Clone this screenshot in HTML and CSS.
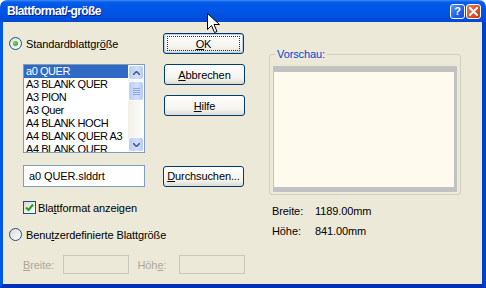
FILE: index.html
```html
<!DOCTYPE html>
<html lang="de">
<head>
  <meta charset="UTF-8" />
  <title>Blattformat/-größe</title>
  <link rel="stylesheet" href="styles.css">
</head>
<body>
  <div class="window">
    <div class="titlebar">
      <span class="title">Blattformat/-größe</span>
      <span class="cbtn help">?</span>
      <span class="cbtn close">
        <svg width="9" height="9" viewBox="0 0 9 9"><path d="M1 1L8 8M8 1L1 8" stroke="#fff" stroke-width="2" stroke-linecap="square"/></svg>
      </span>
      <svg class="cursor" width="13" height="21" viewBox="0 0 13 21">
        <path d="M0.5 0.5V16.5L4.5 12.5L7.5 19.5L10 18.5L7 11.5H12.5Z" fill="#fff" stroke="#000" stroke-width="1"/>
      </svg>
    </div>

    <div class="frame">
      <div class="left">
        <div class="row-top">
          <label class="opt">
            <span class="radio on"></span>
            <span>Standardblattgr<u>ö</u>ße</span>
          </label>
          <button class="btn default"><span class="focus"><u>O</u>K</span></button>
        </div>

        <div class="row-list">
          <div class="list">
            <div class="items">
              <div class="sel">a0 QUER</div>
              <div>A3 BLANK QUER</div>
              <div>A3 PION</div>
              <div>A3 Quer</div>
              <div>A4 BLANK HOCH</div>
              <div>A4 BLANK QUER A3</div>
              <div>A4 BLANK QUER</div>
            </div>
            <div class="vscroll">
              <div class="sb">
                <svg width="7" height="4" viewBox="0 0 7 4"><path d="M0 4L3.5 0.5L7 4" fill="none" stroke="#4D6185" stroke-width="1.6"/></svg>
              </div>
              <div class="thumb"><i></i><i></i><i></i><i></i></div>
              <div class="track"></div>
              <div class="sb">
                <svg width="7" height="4" viewBox="0 0 7 4"><path d="M0 0L3.5 3.5L7 0" fill="none" stroke="#4D6185" stroke-width="1.6"/></svg>
              </div>
            </div>
          </div>
          <div class="btn-col">
            <button class="btn"><u>A</u>bbrechen</button>
            <button class="btn"><u>H</u>ilfe</button>
          </div>
        </div>

        <div class="row-file">
          <div class="field">a0 QUER.slddrt</div>
          <button class="btn"><u>D</u>urchsuchen...</button>
        </div>

        <label class="opt check-row">
          <span class="check">
            <svg width="9" height="9" viewBox="0 0 9 9"><path d="M1 4.5L3.5 7L8 1.5" fill="none" stroke="#21A121" stroke-width="2"/></svg>
          </span>
          <span>Bla<u>t</u>tformat anzeigen</span>
        </label>

        <label class="opt custom-row">
          <span class="radio"></span>
          <span>Benu<u>t</u>zerdefinierte Blattgröße</span>
        </label>

        <div class="row-size">
          <span class="dis lbl-w"><u>B</u>reite:</span>
          <span class="dis-field"></span>
          <span class="dis lbl-h">Höh<u>e</u>:</span>
          <span class="dis-field"></span>
        </div>
      </div>

      <div class="right">
        <fieldset class="group">
          <legend>Vorschau:</legend>
          <div class="preview"></div>
        </fieldset>
        <div class="dims">
          <span>Breite:</span><span>1189.00mm</span>
          <span>Höhe:</span><span>841.00mm</span>
        </div>
      </div>
    </div>
  </div>
</body>
</html>
```

FILE: styles.css
```css
* {
  box-sizing: border-box;
}

body {
  margin: 0;
  background: #fff;
  font-family: 'Liberation Sans', Arial, sans-serif;
  font-size: 11px;
  letter-spacing: -0.1px;
  color: #000;
}

u {
  text-decoration: underline;
  text-underline-offset: 1px;
}

.window {
  width: 486px;
  height: 288px;
  overflow: hidden;
}

/* title bar */
.titlebar {
  position: relative;
  height: 22px;
  display: flex;
  align-items: center;
  padding: 0 5px 0 7px;
  border-radius: 7px 7px 0 0;
  background: linear-gradient(#3E8DF7 0, #0A5DEB 2px, #0058E6 5px, #0054E3 60%, #0048D4 100%);
}

.title {
  flex: 1;
  color: #fff;
  font-weight: bold;
  font-size: 12px;
  letter-spacing: -0.6px;
  text-shadow: 1px 1px 0 #0A1E8C;
}

.cbtn {
  width: 15px;
  height: 15px;
  margin-left: 1px;
  border: 1px solid #fff;
  border-radius: 3px;
  display: flex;
  align-items: center;
  justify-content: center;
  color: #fff;
  font-weight: bold;
  font-size: 11px;
}

.help {
  background: linear-gradient(135deg, #5A97FF, #1C5FE6 60%, #1650D0);
}

.close {
  background: linear-gradient(135deg, #E8845E, #E1522A 50%, #C83A12);
}

.cursor {
  position: absolute;
  left: 207px;
  top: 13px;
  z-index: 5;
}

/* window frame */
.frame {
  display: flex;
  height: 266px;
  background: #ECE9D8;
  border-style: solid;
  border-width: 0 4px 4px 3px;
  border-color: #0054E3 #0040C8 #0031B4 #0058E6;
}

.left {
  width: 242px;
  padding: 11px 0 0 6px;
}

.opt {
  display: flex;
  align-items: center;
  gap: 4px;
}

.radio {
  width: 13px;
  height: 13px;
  border-radius: 50%;
  border: 1px solid #1C5180;
  background: linear-gradient(135deg, #DCD9CE, #fff);
  display: flex;
  align-items: center;
  justify-content: center;
}

.radio.on::after {
  content: "";
  width: 5px;
  height: 5px;
  border-radius: 50%;
  background: radial-gradient(circle at 35% 35%, #6ADC64, #21A121);
}

.check {
  width: 13px;
  height: 13px;
  border: 1px solid #1C5180;
  background: linear-gradient(135deg, #DCD9CE, #fff);
  display: flex;
  align-items: center;
  justify-content: center;
}

.btn {
  width: 81px;
  height: 21px;
  padding: 0;
  border: 1px solid #003C74;
  border-radius: 3px;
  background: linear-gradient(#fff, #F4F3EE 70%, #DEDBCF);
  font: inherit;
  letter-spacing: inherit;
  color: #000;
  display: flex;
  align-items: center;
  justify-content: center;
}

.btn.default {
  box-shadow: inset 0 0 0 1px #B6CCF2;
}

.focus {
  width: 73px;
  height: 15px;
  border: 1px dotted #333;
  display: flex;
  align-items: center;
  justify-content: center;
}

.row-top {
  display: flex;
  align-items: center;
}

.row-top .opt {
  width: 154px;
}

.row-list {
  display: flex;
  margin-top: 10px;
}

.list {
  width: 122px;
  height: 89px;
  margin-left: 14px;
  border: 1px solid #7F9DB9;
  background: #fff;
  display: flex;
}

.items {
  flex: 1;
  min-width: 0;
  overflow: hidden;
}

.items div {
  height: 13px;
  line-height: 13px;
  padding-left: 2px;
  letter-spacing: -0.45px;
  white-space: nowrap;
}

.items .sel {
  background: #316AC5;
  color: #fff;
}

.vscroll {
  width: 16px;
  display: flex;
  flex-direction: column;
  background: linear-gradient(90deg, #F0EFE8, #FDFDFA);
}

.sb {
  height: 15px;
  border: 1px solid #fff;
  border-radius: 3px;
  background: linear-gradient(90deg, #BACDF8, #D2DFFD 60%, #B6C9F5);
  display: flex;
  align-items: center;
  justify-content: center;
}

.thumb {
  height: 20px;
  margin-top: 1px;
  border: 1px solid #fff;
  border-radius: 3px;
  background: linear-gradient(90deg, #BACDF8, #D2DFFD 60%, #B6C9F5);
  display: flex;
  flex-direction: column;
  align-items: center;
  justify-content: center;
  gap: 1px;
}

.thumb i {
  width: 7px;
  height: 1px;
  background: #8EA8E4;
}

.track {
  flex: 1;
}

.btn-col {
  display: flex;
  flex-direction: column;
  gap: 10px;
  margin-left: 19px;
}

.row-file {
  display: flex;
  align-items: center;
  margin-top: 12px;
}

.field {
  width: 122px;
  height: 22px;
  margin-left: 14px;
  margin-right: 18px;
  border: 1px solid #7F9DB9;
  background: #fff;
  padding-left: 5px;
  line-height: 20px;
}

.check-row {
  margin: 14px 0 0 14px;
  gap: 2px;
}

.custom-row {
  margin-top: 14px;
}

.row-size {
  display: flex;
  align-items: center;
  margin: 14px 0 0 14px;
}

.dis {
  color: #ACA899;
}

.lbl-w {
  width: 40px;
}

.lbl-h {
  width: 42px;
  margin-left: 9px;
}

.dis-field {
  width: 66px;
  height: 19px;
  border: 1px solid #CBC8BA;
}

/* preview */
.right {
  margin-left: 24px;
  padding-top: 26px;
}

.group {
  width: 192px;
  margin: 0;
  padding: 5px 3px 2px 3px;
  border: 1px solid #D0D0BF;
  border-radius: 3px;
}

.group legend {
  margin-left: 2px;
  padding: 0 2px;
  color: #0046D5;
  line-height: 13px;
}

.preview {
  width: 184px;
  height: 126px;
  background: #FEFAEE;
  border-style: solid;
  border-color: #C2C2C2;
  border-width: 6px 3px 5px 1px;
}

.dims {
  display: grid;
  grid-template-columns: 43px auto;
  row-gap: 7px;
  margin: 10px 0 0 3px;
  line-height: 13px;
}
```
